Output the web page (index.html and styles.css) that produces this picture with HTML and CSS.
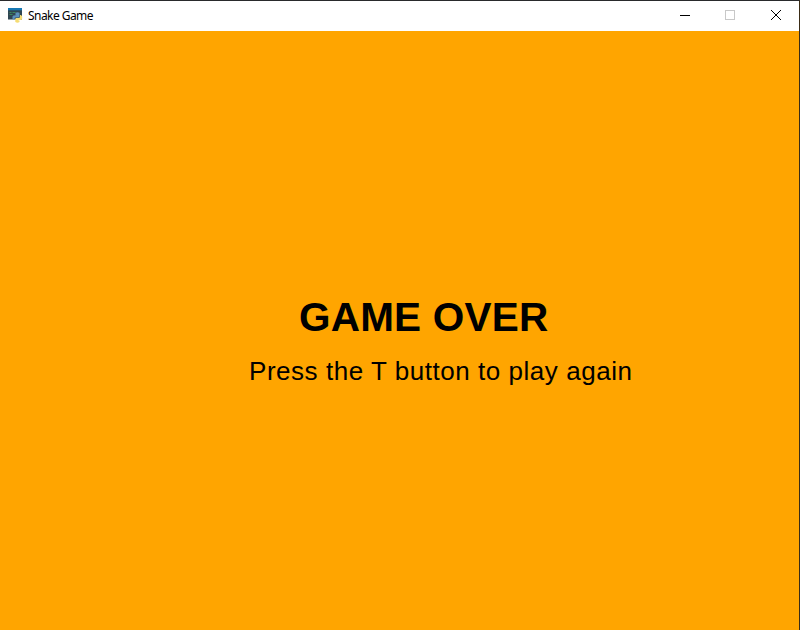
FILE: index.html
```html
<!DOCTYPE html>
<html lang="en">
<head>
<meta charset="utf-8">
<title>Snake Game</title>
<link rel="stylesheet" href="styles.css">
</head>
<body>
<div class="window">
  <header class="titlebar">
    <svg class="app-icon" width="16" height="16" viewBox="0 0 16 16">
      <rect x="1" y="0" width="14" height="11.500" fill="#304652"/>
      <rect x="1" y="0" width="14" height="2.300" fill="#1678b3"/>
      <path d="M2.500 4.500h2M5.500 4.500h3M2.500 6.500h3" stroke="#3c8a61"/>
      <path d="M8.500 4.800Q10.500 3.500 12.500 4.800V8.300Q12.500 9.500 11 9.500H8.500Q7.500 9.500 7.500 11.500H6.500Q5 11 5.500 8.500Q6 7 10 7H8.500Z" fill="#5c91bc"/>
      <path d="M13 7H14Q15.800 8 15.200 10.500Q15 12 13.500 12H11.500V12.500H12.500V14Q10.500 15.500 8.300 14V11Q8.300 10 9.500 10H11.500Q13 10 13 8.500Z" fill="#f5dc72"/>
    </svg>
    <span class="caption">Snake Game</span>
    <div class="controls">
      <svg width="46" height="30" viewBox="0 0 46 30"><path d="M18 14.500h10" stroke="#000"/></svg>
      <svg width="45" height="30" viewBox="0 0 45 30"><rect x="17.500" y="9.500" width="9" height="9" fill="none" stroke="#c8c8c8"/></svg>
      <svg width="46" height="30" viewBox="0 0 46 30"><path d="M18 9l10 10M28 9l-10 10" stroke="#000"/></svg>
    </div>
  </header>
  <main class="board">
    <h1 class="headline">GAME OVER</h1>
    <p class="hint">Press the T button to play again</p>
  </main>
</div>
</body>
</html>
```

FILE: styles.css
```css
body {
  margin: 0;
}
.window {
  box-sizing: border-box;
  width: 800px;
  height: 630px;
  border-top: 1px solid #292a2c;
  border-right: 1px solid #3a2c16;
  display: flex;
  flex-direction: column;
  overflow: hidden;
}
.titlebar {
  flex: 0 0 30px;
  display: flex;
  align-items: center;
  padding-left: 7px;
  background: #fff;
}
.app-icon {
  margin-right: 5px;
}
.caption {
  font: 12px/16px "Noto Sans", sans-serif;
  letter-spacing: -0.55px;
  color: #000;
}
.controls {
  display: flex;
  margin-left: auto;
}
.board {
  flex: 1;
  background: #ffa500;
  color: #000;
  font-family: "Liberation Sans", sans-serif;
}
.headline {
  margin: 263px 0 0 299px;
  font-size: 40.500px;
  line-height: 46px;
  font-weight: 700;
  letter-spacing: 0.2px;
  white-space: nowrap;
}
.hint {
  margin: 16px 0 0 249px;
  font-size: 26px;
  line-height: 30px;
  letter-spacing: 0.54px;
  white-space: nowrap;
}
```
